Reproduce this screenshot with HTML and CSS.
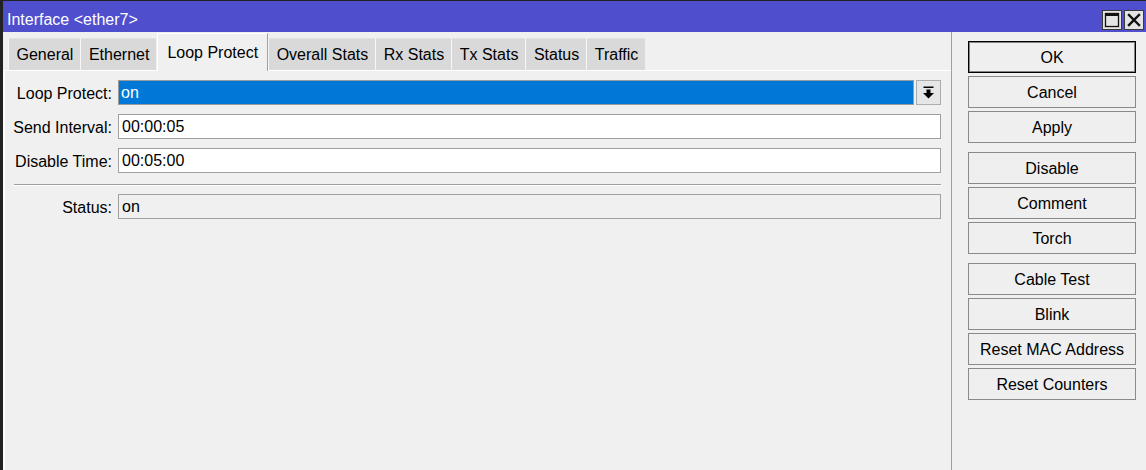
FILE: index.html
```html
<!DOCTYPE html>
<html>
<head>
<meta charset="utf-8">
<title>Interface ether7</title>
<link rel="stylesheet" href="styles.css">
</head>
<body>
<div class="window">
  <div class="titlebar">
    <span class="title">Interface &lt;ether7&gt;</span>
    <div class="tb-btns">
      <span class="tb-btn">
        <svg width="16" height="16" viewBox="0 0 16 16"><rect x="1.5" y="1.5" width="13" height="13" fill="none" stroke="#111" stroke-width="1.3"/><rect x="1" y="1" width="14" height="3" fill="#111"/></svg>
      </span>
      <span class="tb-btn">
        <svg width="16" height="16" viewBox="0 0 16 16"><path d="M3 3 L13 13 M13 3 L3 13" stroke="#111" stroke-width="2.4" stroke-linecap="square"/></svg>
      </span>
    </div>
  </div>
  <div class="body">
    <div class="main">
      <div class="tabs">
        <div class="tab">General</div>
        <div class="tab">Ethernet</div>
        <div class="tab active">Loop Protect</div>
        <div class="tab">Overall Stats</div>
        <div class="tab">Rx Stats</div>
        <div class="tab">Tx Stats</div>
        <div class="tab">Status</div>
        <div class="tab">Traffic</div>
      </div>
      <div class="panel">
        <div class="row">
          <div class="label">Loop Protect:</div>
          <div class="field sel">on</div>
          <div class="dd">
            <svg width="23" height="23" viewBox="0 0 23 23"><rect x="6.5" y="5.5" width="10" height="1.5" fill="#000"/><rect x="9.5" y="8.5" width="4" height="4" fill="#000"/><polygon points="6,12 17,12 11.5,17.5" fill="#000"/></svg>
          </div>
        </div>
        <div class="row">
          <div class="label">Send Interval:</div>
          <div class="field">00:00:05</div>
        </div>
        <div class="row">
          <div class="label">Disable Time:</div>
          <div class="field">00:05:00</div>
        </div>
        <div class="sep"></div>
        <div class="row">
          <div class="label">Status:</div>
          <div class="field ro">on</div>
        </div>
      </div>
    </div>
    <div class="side">
      <div class="btn default">OK</div>
      <div class="btn">Cancel</div>
      <div class="btn">Apply</div>
      <div class="btn gap">Disable</div>
      <div class="btn">Comment</div>
      <div class="btn">Torch</div>
      <div class="btn gap">Cable Test</div>
      <div class="btn">Blink</div>
      <div class="btn">Reset MAC Address</div>
      <div class="btn">Reset Counters</div>
    </div>
  </div>
</div>
</body>
</html>
```

FILE: styles.css
```css
* { box-sizing: border-box; }
html, body { margin: 0; padding: 0; }
body {
  width: 1146px;
  height: 470px;
  overflow: hidden;
  font-family: "Liberation Sans", Arial, sans-serif;
  font-size: 16px;
  color: #000;
  background: #f0f0f0;
}
.window {
  height: 470px;
  border-left: 3px solid #222;
  border-top: 1px solid #222;
  display: flex;
  flex-direction: column;
  background: #f0f0f0;
}
.titlebar {
  height: 31px;
  flex: none;
  background: #4f4fce;
  color: #fff;
  display: flex;
  align-items: flex-start;
}
.title {
  padding: 9px 0 0 4px;
  line-height: 20px;
  white-space: nowrap;
}
.tb-btns {
  margin-left: auto;
  margin-top: 9px;
  margin-right: 2px;
  display: flex;
  gap: 2px;
}
.tb-btn {
  width: 20px;
  height: 20px;
  background: #e4e4e4;
  border: 1px solid #3a3a3a;
  display: flex;
  align-items: center;
  justify-content: center;
}
.body {
  flex: 1;
  display: flex;
  min-height: 0;
}
.main {
  width: 949px;
  flex: none;
  display: flex;
  flex-direction: column;
  border-right: 1px solid #a0a0a0;
}
.tabs {
  height: 38px;
  flex: none;
  display: flex;
  align-items: flex-end;
  padding-left: 5px;
  position: relative;
  z-index: 1;
}
.tab {
  height: 32px;
  padding: 1px 7px 0 7.5px;
  line-height: 29px;
  background: #d9d9d9;
  border-left: 1px solid #f7f7f7;
  border-top: 1px solid #e2e2e2;
  white-space: nowrap;
}
.tab.active {
  height: 38px;
  margin-bottom: -1px;
  margin-left: 1px;
  padding: 1px 9px 0;
  line-height: 35px;
  background: #f0f0f0;
  border: 1px solid #fff;
  border-right-color: #a0a0a0;
  border-bottom: none;
}
.panel {
  flex: 1;
  border-top: 1px solid #fff;
  border-left: 2px solid #fbfbfb;
  padding: 9px 10px 0 0;
}
.row {
  display: flex;
  align-items: center;
  height: 25px;
  margin-bottom: 9px;
}
.label {
  width: 107px;
  flex: none;
  text-align: right;
  margin-right: 6px;
  padding-top: 2px;
  white-space: nowrap;
}
.field {
  flex: 1;
  height: 25px;
  border: 1px solid #a0a0a0;
  background: #fff;
  padding: 1px 0 0 3px;
  line-height: 22px;
}
.field.sel {
  background: #0078d7;
  color: #fff;
  border-color: #9a9a9a;
  padding-left: 2px;
}
.field.ro {
  background: #f0f0f0;
}
.dd {
  width: 25px;
  height: 25px;
  flex: none;
  margin-left: 2px;
  border: 1px solid #adadad;
  background: #e6e6e6;
}
.dd svg { display: block; }
.sep {
  margin: 11px 0 8px 9px;
  border-top: 1px solid #a0a0a0;
  border-bottom: 1px solid #fff;
}
.side {
  flex: 1;
  padding: 9px 0 0 16px;
  display: flex;
  flex-direction: column;
}
.btn {
  width: 168px;
  height: 32px;
  flex: none;
  border: 1px solid #8a8a8a;
  background: #efefef;
  text-align: center;
  padding-top: 1px;
  line-height: 29px;
  margin-bottom: 3px;
  white-space: nowrap;
}
.btn.default {
  border-color: #000;
  box-shadow: inset 0 0 0 1px rgba(0, 0, 0, 0.45);
}
.btn.gap {
  margin-top: 6px;
}
```
